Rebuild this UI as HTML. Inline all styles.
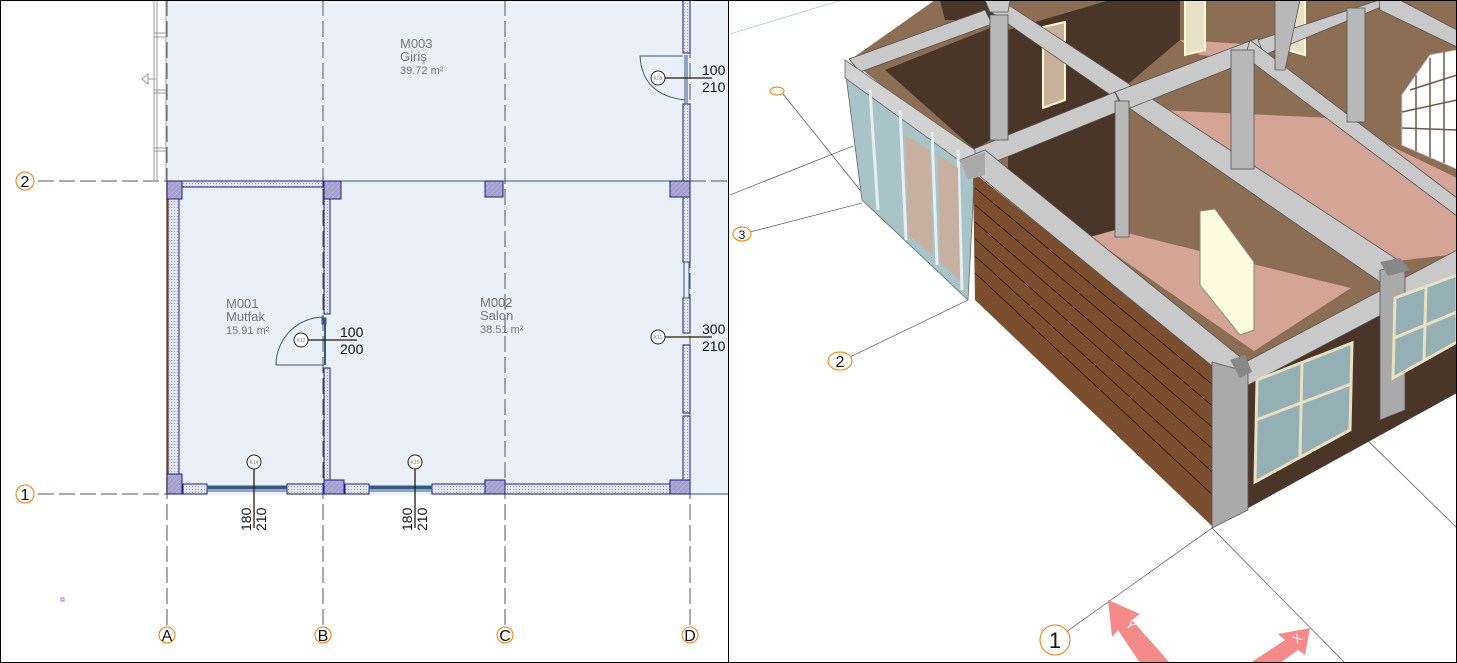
<!DOCTYPE html>
<html><head><meta charset="utf-8"><style>
html,body{margin:0;padding:0;background:#fff;}
svg{display:block;font-family:"Liberation Sans",sans-serif;}
</style></head><body>
<svg width="1457" height="663" viewBox="0 0 1457 663" xmlns="http://www.w3.org/2000/svg">
<defs>
<pattern id="dots" width="3" height="3" patternUnits="userSpaceOnUse"><rect width="3" height="3" fill="#e4e6ec"/><rect width="1" height="1" fill="#9aa0b4"/></pattern>
<pattern id="hat" width="5" height="5" patternUnits="userSpaceOnUse"><rect width="5" height="5" fill="#a39fcc"/><path d="M0 5L5 0" stroke="#b8b4d8" stroke-width="1"/></pattern>
</defs>
<rect x="0" y="0" width="1457" height="663" fill="#fff"/>
<!-- ===== PLAN ===== -->
<rect x="167" y="0" width="561" height="495" fill="#e9f0f7"/>
<g stroke="#999" stroke-width="1" fill="none">
<line x1="154" y1="0" x2="154" y2="180"/><line x1="157" y1="0" x2="157" y2="180"/><line x1="166" y1="0" x2="166" y2="180"/>
<line x1="154" y1="33" x2="166" y2="33"/><line x1="154" y1="37" x2="166" y2="37"/>
<line x1="154" y1="90" x2="166" y2="90"/><line x1="154" y1="93" x2="166" y2="93"/>
<line x1="154" y1="148" x2="166" y2="148"/><line x1="154" y1="151" x2="166" y2="151"/>
<path d="M148 74L142 79L148 84Z M148 79H156"/>
</g>
<g stroke="#555" stroke-width="1" stroke-dasharray="16,5">
<line x1="167" y1="0" x2="167" y2="625"/><line x1="323" y1="0" x2="323" y2="625"/>
<line x1="505" y1="0" x2="505" y2="625"/><line x1="690" y1="0" x2="690" y2="625"/>
<line x1="38" y1="181" x2="167" y2="181"/><line x1="38" y1="494" x2="167" y2="494"/>
<line x1="690" y1="181" x2="728" y2="181"/>
</g>
<line x1="167" y1="181" x2="690" y2="181" stroke="#335a8a" stroke-width="1"/>
<line x1="690" y1="494" x2="728" y2="494" stroke="#335a8a" stroke-width="1"/>
<g stroke="#1c1c8a" stroke-width="1" fill="url(#dots)">
<rect x="181" y="181" width="142" height="6"/>
<rect x="168" y="199" width="11" height="279"/>
<rect x="324" y="199" width="6" height="115"/>
<rect x="324" y="368" width="6" height="116"/>
<rect x="683" y="0" width="7" height="53"/>
<rect x="683" y="104" width="7" height="158"/>
<rect x="683" y="298" width="7" height="35"/>
<rect x="683" y="345" width="7" height="68"/>
<rect x="683" y="416" width="7" height="68"/>
<rect x="183" y="484" width="24" height="10"/>
<rect x="287" y="484" width="36" height="10"/>
<rect x="345" y="484" width="24" height="10"/>
<rect x="432" y="484" width="53" height="10"/>
<rect x="505" y="484" width="165" height="10"/>
</g>
<line x1="167" y1="181" x2="167" y2="494" stroke="#8b4513" stroke-width="1.5"/>
<g stroke="#335a8a" fill="none">
<rect x="207" y="486" width="80" height="3" fill="#335a8a"/>
<rect x="369" y="486" width="63" height="3" fill="#335a8a"/>
<line x1="207" y1="491" x2="287" y2="491"/><line x1="369" y1="491" x2="432" y2="491"/>
<rect x="684" y="262" width="5" height="36"/>
</g>
<g stroke="#1c1c8a" stroke-width="1" fill="url(#hat)">
<rect x="167" y="181" width="15" height="18"/>
<rect x="324" y="181" width="17" height="18"/>
<rect x="485" y="181" width="18" height="16"/>
<rect x="670" y="181" width="20" height="16"/>
<rect x="167" y="474" width="15" height="20"/>
<rect x="324" y="480" width="20" height="14"/>
<rect x="485" y="480" width="20" height="14"/>
<rect x="670" y="480" width="20" height="14"/>
</g>
<g stroke="#335a8a" fill="none" stroke-width="1">
<path d="M324 317A48 48 0 0 0 276 365H324"/>
<rect x="322" y="318" width="4" height="6" fill="#335a8a"/>
<line x1="325" y1="318" x2="325" y2="365" stroke-width="2"/>
<path d="M683 56H640Q642 95 685 100"/>
<line x1="685" y1="55" x2="685" y2="104"/><line x1="687" y1="55" x2="687" y2="104"/>
</g>
<g stroke="#222" fill="#fff" stroke-width="1">
<circle cx="301" cy="340" r="7"/><circle cx="658" cy="78" r="7"/><circle cx="658" cy="337" r="7"/>
<circle cx="254" cy="462" r="7"/><circle cx="415" cy="462" r="7"/>
</g>
<g stroke="#2a1a0a" stroke-width="1.3">
<line x1="308" y1="340" x2="357" y2="340"/><line x1="665" y1="78" x2="712" y2="78"/><line x1="665" y1="337" x2="712" y2="337"/>
<line x1="254" y1="469" x2="254" y2="528"/><line x1="415" y1="469" x2="415" y2="528"/>
</g>
<g font-size="5" fill="#777" text-anchor="middle">
<text x="301" y="342">K12</text><text x="658" y="80">K09</text><text x="658" y="339">K11</text>
<text x="254" y="464">K14</text><text x="415" y="464">K15</text>
</g>
<g font-size="14" fill="#111">
<text x="340" y="337">100</text><text x="340" y="354">200</text>
<text x="702" y="75">100</text><text x="702" y="92">210</text>
<text x="702" y="334">300</text><text x="702" y="351">210</text>
<text transform="translate(251,531) rotate(-90)">180</text><text transform="translate(266,531) rotate(-90)">210</text>
<text transform="translate(412,531) rotate(-90)">180</text><text transform="translate(427,531) rotate(-90)">210</text>
</g>
<g fill="#777">
<text x="400" y="48" font-size="13">M003</text><text x="400" y="61" font-size="13">Giriş</text><text x="400" y="74" font-size="11">39.72 m²</text>
<text x="226" y="308" font-size="13">M001</text><text x="226" y="321" font-size="13">Mutfak</text><text x="226" y="334" font-size="11">15.91 m²</text>
<text x="480" y="307" font-size="13">M002</text><text x="480" y="320" font-size="13">Salon</text><text x="480" y="333" font-size="11">38.51 m²</text>
</g>
<g stroke="#f07800" fill="#fff" stroke-width="1">
<circle cx="25" cy="181" r="9"/><circle cx="25" cy="494" r="9"/>
<circle cx="167" cy="635" r="8"/><circle cx="323" cy="635" r="8"/><circle cx="505" cy="635" r="8"/><circle cx="690" cy="635" r="8"/>
</g>
<g font-size="16" fill="#111" text-anchor="middle">
<text x="25" y="187">2</text><text x="25" y="500">1</text>
<text x="167" y="641">A</text><text x="323" y="641">B</text><text x="505" y="641">C</text><text x="690" y="641">D</text>
</g>
<rect x="61" y="598" width="3" height="3" fill="none" stroke="#a050c0" stroke-width="0.8"/>

<!-- ===== 3D ===== -->
<g stroke="#333" stroke-width="0.6" fill="none">
<line x1="730" y1="34" x2="842" y2="0" stroke="#8bb"/>
<line x1="730" y1="195" x2="853" y2="146"/>
<line x1="750" y1="232" x2="862" y2="203"/>
<line x1="783" y1="94" x2="860" y2="190"/>
<line x1="850" y1="357" x2="968" y2="300"/>
<line x1="1066" y1="632" x2="1212" y2="528"/>
<line x1="1212" y1="528" x2="1345" y2="663"/>
<line x1="1355" y1="428" x2="1457" y2="528"/>
</g>
<polygon points="935,0 1457,0 1457,262 1240,368 975,160 850,60" fill="#8c6e55"/>
<polygon points="885,70 990,28 990,140 975,150" fill="#4a3628"/>
<polygon points="1008,30 1110,0 1180,0 1180,40 1115,95 1008,140" fill="#4a3628"/>
<polygon points="940,0 1000,0 990,20 945,20" fill="#4a3628"/>
<polygon points="1008,135 1115,100 1115,233 1090,240 1008,200" fill="#4a3628"/>
<polygon points="975,150 1008,135 1008,145 985,158" fill="#d4a596"/>
<polygon points="1090,237 1115,230 1351,288 1254,351" fill="#d4a596"/>
<polygon points="1157,110 1333,118 1457,178 1457,254 1388,262 1245,165" fill="#d4a596"/>
<polygon points="1180,40 1260,45 1258,60 1200,55" fill="#d4a596"/>
<polygon points="1115,230 1133,126 1374,275 1351,288" fill="#8c6e55"/>
<polygon points="1200,211 1215,209 1254,262 1254,330 1240,335 1200,285" fill="#fffbe0" stroke="#887" stroke-width="1"/>
<polygon points="1043,27 1065,22 1065,100 1043,108" fill="#c8b09a" stroke="#fff8d0" stroke-width="2"/>
<polygon points="1185,0 1205,0 1205,50 1185,55" fill="#e8e0c8" stroke="#fff8d0" stroke-width="2"/>
<polygon points="1287,0 1305,0 1305,55 1287,50" fill="#e8e0c8" stroke="#fff8d0" stroke-width="2"/>
<polygon points="1402,95 1430,55 1457,50 1457,169 1402,145" fill="#fff" stroke="#ccc"/>
<g stroke="#6a5a4a" stroke-width="1.5"><line x1="1416" y1="75" x2="1416" y2="151"/><line x1="1430" y1="58" x2="1430" y2="157"/><line x1="1444" y1="52" x2="1444" y2="163"/><line x1="1402" y1="112" x2="1457" y2="100"/><line x1="1402" y1="128" x2="1457" y2="130"/><line x1="1410" y1="90" x2="1457" y2="75"/></g>
<g fill="#c9c9c9" stroke="#555" stroke-width="0.8">
<polygon points="849,59 985,10 992,24 860,72"/>
<polygon points="988,10 1010,6 1398,260 1380,282"/>
<polygon points="971,150 1115,92 1122,110 982,167"/>
<polygon points="1115,92 1258,38 1264,55 1125,110"/>
<polygon points="1258,40 1379,0 1398,0 1264,55"/>
<polygon points="1379,0 1400,0 1457,30 1457,47 1380,10"/>
<polygon points="1250,40 1457,198 1457,216 1245,57"/>
<polygon points="985,0 1010,0 1008,12 990,12"/>
<rect x="990" y="15" width="18" height="125" fill="#b8b8b8"/>
<rect x="1115" y="101" width="14" height="136" fill="#b8b8b8"/>
<rect x="1231" y="50" width="23" height="119" fill="#b8b8b8"/>
<rect x="1347" y="8" width="18" height="114" fill="#b8b8b8"/>
<polygon points="1275,0 1300,0 1285,70 1275,70" fill="#b8b8b8"/>
</g>
<polygon points="845,68 975,165 968,300 862,200" fill="#a9c4c8" stroke="#666" stroke-width="0.8"/>
<polygon points="845,60 975,150 975,172 845,78" fill="#d2d2d2" stroke="#666" stroke-width="0.8"/>
<g stroke="#e8eef0" stroke-width="3"><line x1="870" y1="90" x2="878" y2="210"/><line x1="900" y1="110" x2="906" y2="240"/><line x1="932" y1="132" x2="937" y2="265"/><line x1="958" y1="150" x2="962" y2="290"/></g>
<polygon points="905,135 930,150 933,255 908,235" fill="#c8b0a0"/>
<polygon points="938,155 958,168 960,280 940,262" fill="#c8b0a0"/>
<polygon points="973,172 1233,380 1213,527 975,300" fill="#7a4e2e"/>
<g stroke="#2a1808" stroke-width="0.8">
<line x1="975" y1="188" x2="1231" y2="400"/><line x1="975" y1="205" x2="1229" y2="420"/><line x1="975" y1="222" x2="1227" y2="440"/><line x1="975" y1="239" x2="1225" y2="460"/><line x1="975" y1="256" x2="1221" y2="480"/><line x1="975" y1="273" x2="1218" y2="500"/>
</g>
<polygon points="960,160 985,150 1250,365 1233,383" fill="#c9c9c9" stroke="#555" stroke-width="0.8"/>
<polygon points="960,160 985,152 985,175 968,180" fill="#aaa"/>
<polygon points="1240,368 1457,262 1457,393 1212,528" fill="#4a3628"/>
<polygon points="1240,365 1457,250 1457,275 1248,385" fill="#c9c9c9" stroke="#555" stroke-width="0.8"/>
<polygon points="1212,362 1248,372 1248,510 1212,528" fill="#aaa" stroke="#555" stroke-width="0.8"/>
<polygon points="1380,270 1405,265 1405,410 1380,420" fill="#aaa" stroke="#555" stroke-width="0.8"/>
<polygon points="1380,262 1400,258 1410,270 1388,276" fill="#888"/>
<polygon points="1230,360 1245,355 1252,372 1240,378" fill="#888"/>
<polygon points="1257,380 1352,343 1350,430 1255,482" fill="#94b0b4" stroke="#e8e0c0" stroke-width="3"/>
<g stroke="#e8e0c0" stroke-width="3"><line x1="1302" y1="362" x2="1300" y2="456"/><line x1="1256" y1="420" x2="1351" y2="384"/></g>
<polygon points="1395,298 1457,275 1457,342 1393,378" fill="#94b0b4" stroke="#e8e0c0" stroke-width="3"/>
<g stroke="#e8e0c0" stroke-width="3"><line x1="1426" y1="287" x2="1424" y2="360"/><line x1="1394" y1="338" x2="1457" y2="312"/></g>
<g stroke="#f07800" fill="#fff" stroke-width="1">
<ellipse cx="777" cy="91" rx="7" ry="4"/><ellipse cx="742" cy="234" rx="9" ry="7"/><ellipse cx="840" cy="361" rx="12" ry="9"/><circle cx="1055" cy="640" r="15"/>
</g>
<g fill="#111" text-anchor="middle">
<text x="742" y="239" font-size="12">3</text><text x="840" y="367" font-size="16">2</text><text x="1055" y="648" font-size="22">1</text>
</g>
<polygon points="1108,600 1140,614 1132,620 1170,663 1140,663 1118,630 1112,637" fill="#f58a8a"/>
<polygon points="1310,628 1305,655 1298,650 1280,663 1250,663 1285,640 1278,634" fill="#f58a8a"/>
<text x="1128" y="626" font-size="12" fill="#fff" transform="rotate(45 1128 622)">Y</text>
<text x="1295" y="645" font-size="12" fill="#fff" transform="rotate(-40 1295 642)">X</text>
<rect x="0.5" y="0.5" width="1456" height="662" fill="none" stroke="#000"/>
<line x1="728.5" y1="0" x2="728.5" y2="663" stroke="#000"/>
</svg>
</body></html>
